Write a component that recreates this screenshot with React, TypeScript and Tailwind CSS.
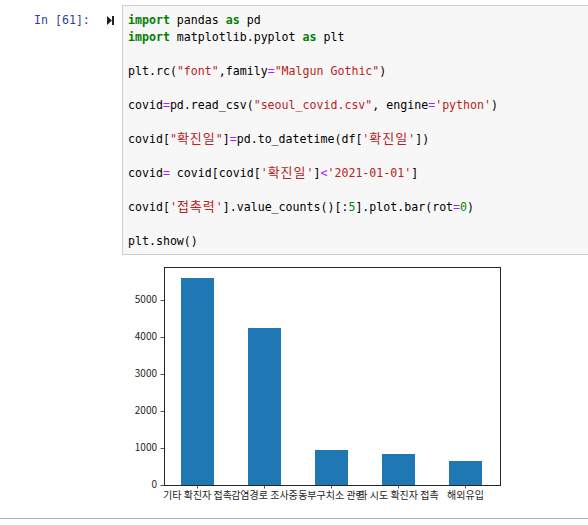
const KW = "font-bold text-[#008000]";
const STR = "text-[#ba2121]";
const OP = "text-[#aa22ff]";
const NUM = "text-[#008800]";

function Ko({ children }: { children: string }) {
  // hangul is double width in the notebook's monospace font
  return <span className="text-[13px] leading-none tracking-[1px] font-['Noto_Sans_CJK_KR',sans-serif]">{children}</span>;
}

function Code() {
  return (
    <div className="whitespace-pre">
      <div>
        <span className={KW}>import</span> pandas <span className={KW}>as</span> pd
      </div>
      <div>
        <span className={KW}>import</span> matplotlib.pyplot <span className={KW}>as</span> plt
      </div>
      <div>&nbsp;</div>
      <div>
        plt.rc(<span className={STR}>"font"</span>,family<span className={OP}>=</span>
        <span className={STR}>"Malgun Gothic"</span>)
      </div>
      <div>&nbsp;</div>
      <div>
        covid<span className={OP}>=</span>pd.read_csv(<span className={STR}>"seoul_covid.csv"</span>, engine
        <span className={OP}>=</span>
        <span className={STR}>'python'</span>)
      </div>
      <div>&nbsp;</div>
      <div>
        covid[<span className={STR}>"<Ko>확진일</Ko>"</span>]<span className={OP}>=</span>pd.to_datetime(df[
        <span className={STR}>'<Ko>확진일</Ko>'</span>])
      </div>
      <div>&nbsp;</div>
      <div>
        covid<span className={OP}>=</span> covid[covid[<span className={STR}>'<Ko>확진일</Ko>'</span>]
        <span className={OP}>&lt;</span>
        <span className={STR}>'2021-01-01'</span>]
      </div>
      <div>&nbsp;</div>
      <div>
        covid[<span className={STR}>'<Ko>접촉력</Ko>'</span>].value_counts()[:<span className={NUM}>5</span>
        ].plot.bar(rot<span className={OP}>=</span>
        <span className={NUM}>0</span>)
      </div>
      <div>&nbsp;</div>
      <div>plt.show()</div>
    </div>
  );
}

const BARS = [
  { label: "기타 확진자 접촉", value: 5594 },
  { label: "감염경로 조사중", value: 4243 },
  { label: "동부구치소 관련", value: 946 },
  { label: "타 시도 확진자 접촉", value: 838 },
  { label: "해외유입", value: 649 },
];

function Chart() {
  const left = 42;
  const top = 12;
  const right = 378;
  const bottom = 230;
  const scale = 0.037;
  const step = 67;
  const first = 75.5;
  const bw = 33;

  return (
    <svg width={466} height={263} viewBox="0 0 466 263" className="block">
      {BARS.map((b, i) => {
        const cx = first + i * step;
        const h = b.value * scale;
        return <rect key={i} x={cx - bw / 2} y={bottom - h} width={bw} height={h} fill="#1f77b4" />;
      })}
      <rect x={left + 0.5} y={top + 0.5} width={right - left} height={bottom - top} fill="none" stroke="#262626" strokeWidth={1} />
      {[0, 1000, 2000, 3000, 4000, 5000].map((v) => {
        const y = bottom - v * scale + 0.5;
        return (
          <g key={v}>
            <line x1={left - 3.5} x2={left} y1={y} y2={y} stroke="#262626" strokeWidth={0.8} />
            <text x={left - 7} y={y} textAnchor="end" dominantBaseline="middle" fontSize={10} fill="#262626" fontFamily="'Noto Sans CJK KR', sans-serif">
              {v}
            </text>
          </g>
        );
      })}
      {BARS.map((b, i) => {
        const cx = first + i * step;
        return (
          <g key={b.label}>
            <line x1={cx} x2={cx} y1={bottom} y2={bottom + 3.5} stroke="#262626" strokeWidth={0.8} />
            <text x={cx} y={bottom + 11.5} textAnchor="middle" dominantBaseline="middle" fontSize={10} fill="#262626" fontFamily="'Noto Sans CJK KR', sans-serif">
              {b.label}
            </text>
          </g>
        );
      })}
    </svg>
  );
}

export default function App() {
  return (
    <div className="w-[588px] h-[525px] overflow-hidden bg-white pt-[5px]">
      <div className="flex">
        <div className="w-[122px] shrink-0 flex items-start pt-[7px] font-['DejaVu_Sans_Mono',monospace] text-[11.6px] leading-[17px]">
          <span className="ml-[34px] text-[#303f9f] whitespace-pre">In [61]:</span>
          <svg width={7} height={9} viewBox="0 0 7 9" className="ml-[17px] mt-[4px]">
            <path d="M0 0 L5 4.5 L0 9 Z" fill="#1e2330" />
            <rect x={5} y={0} width={2} height={9} fill="#1e2330" />
          </svg>
        </div>
        <div className="w-[520px] shrink-0 border border-[#cfcfcf] bg-[#f7f7f7] pl-[5px] pt-[6px] pb-[4px] font-['DejaVu_Sans_Mono',monospace] text-[11.6px] leading-[17px] text-black">
          <Code />
        </div>
      </div>
      <div className="flex">
        <div className="w-[122px] shrink-0" />
        <Chart />
      </div>
      <div className="h-px w-full bg-[#ababab]" />
    </div>
  );
}
